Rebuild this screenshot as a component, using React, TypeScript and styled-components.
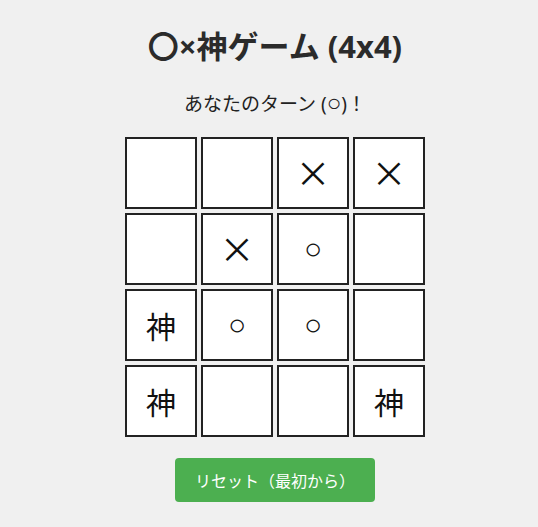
import styled, { createGlobalStyle } from "styled-components";

const GlobalStyle = createGlobalStyle`
  html, body {
    margin: 0;
    padding: 0;
    background: #f0f0f0;
  }
  body {
    font-family: "Noto Sans", "Noto Sans CJK JP", sans-serif;
    color: #333;
  }
`;

const Page = styled.div`
  display: flex;
  flex-direction: column;
  align-items: center;
  padding: 26px 0 0 12px;
  min-height: 527px;
  box-sizing: border-box;
`;

const Title = styled.h1`
  margin: 0;
  font-size: 31px;
  line-height: 40px;
  font-weight: 700;
  color: #2b2b2b;
`;

const Status = styled.p`
  margin: 24px 0 0;
  font-size: 19px;
  line-height: 28px;
  color: #222;
`;

const Circle = styled.span`
  font-family: "Liberation Sans", sans-serif;
  font-size: 24px;
  line-height: 1;
`;

const Board = styled.div`
  display: grid;
  grid-template-columns: repeat(4, 72px);
  grid-auto-rows: 72px;
  gap: 4px;
  margin-top: 19px;
`;

const sizes: Record<string, string> = { "○": "30px", "×": "35px", "神": "30px" };

const Cell = styled.div<{ $mark: string }>`
  box-sizing: border-box;
  border: 2px solid #222;
  background: #fff;
  display: flex;
  align-items: center;
  justify-content: center;
  padding-bottom: ${(p) => (p.$mark === "×" ? "4px" : "0")};
  font-family: ${(p) =>
    p.$mark === "○" ? `"Liberation Sans", sans-serif` : `"Noto Sans CJK JP", sans-serif`};
  font-size: ${(p) => sizes[p.$mark] || "30px"};
  color: #111;
  line-height: 1;
`;

const ResetButton = styled.button`
  margin-top: 21px;
  width: 200px;
  height: 44px;
  border: none;
  border-radius: 4px;
  background: #4caf50;
  color: #fff;
  font-family: "Noto Sans CJK JP", sans-serif;
  font-size: 16px;
  cursor: pointer;
`;

const board = [
  ["", "", "×", "×"],
  ["", "×", "○", ""],
  ["神", "○", "○", ""],
  ["神", "", "", "神"],
];

export default function App() {
  return (
    <>
      <GlobalStyle />
      <Page>
        <Title>〇×神ゲーム (4x4)</Title>
        <Status>
          あなたのターン (<Circle>○</Circle>)！
        </Status>
        <Board>
          {board.flat().map((m, i) => (
            <Cell key={i} $mark={m}>
              {m}
            </Cell>
          ))}
        </Board>
        <ResetButton>リセット（最初から）</ResetButton>
      </Page>
    </>
  );
}
